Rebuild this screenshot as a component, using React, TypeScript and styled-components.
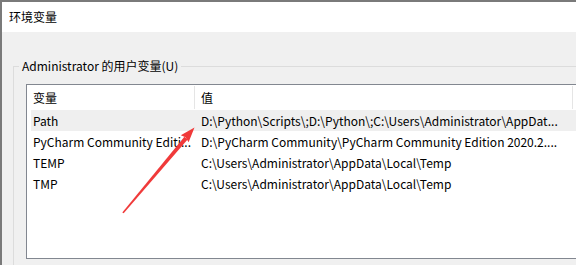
import React from 'react'
import styled, { createGlobalStyle } from 'styled-components'

const GlobalStyle = createGlobalStyle`
    html, body {
        margin: 0;
        padding: 0;
        background: #f0f0f0;
    }
    body {
        font-family: "Noto Sans CJK SC", "Noto Sans", sans-serif;
        font-size: 12px;
        color: #000;
    }
`

const Window = styled.div`
    position: relative;
    width: 576px;
    height: 265px;
    box-sizing: border-box;
    overflow: hidden;
    border-top: 2px solid #7a7a7a;
    border-left: 2px solid #7a7a7a;
    background: #f0f0f0;
`

const TitleBar = styled.div`
    height: 30px;
    background: #fff;
    padding-left: 7px;
    display: flex;
    align-items: center;
    line-height: 1;
`

const Body = styled.div`
    padding: 26px 0 0 11px;
`

const GroupBox = styled.fieldset`
    margin: 0;
    width: 600px;
    height: 240px;
    box-sizing: border-box;
    border: 1px solid #dcdcdc;
    padding: 0 0 0 12px;
    min-inline-size: auto;
`

const GroupLabel = styled.legend`
    margin-left: -7px;
    padding: 0 3px;
    height: 16px;
    line-height: 16px;
    margin-bottom: 10px;
`

const ListBox = styled.div`
    width: 580px;
    height: 175px;
    box-sizing: border-box;
    border: 1px solid #828790;
    background: #fff;
`

const Header = styled.div`
    display: grid;
    grid-template-columns: 168px 378px;
    height: 25px;
`

const HeaderCell = styled.div`
    display: flex;
    align-items: center;
    padding-left: 6px;
    border-right: 1px solid #e5e5e5;
    margin: 1px 0 1px;
`

const Row = styled.div<{ $selected?: boolean }>`
    display: grid;
    grid-template-columns: 164px 1fr;
    height: 21px;
    margin-left: 4px;
    background: ${({ $selected }) => ($selected ? '#efefef' : 'transparent')};
`

const Cell = styled.div<{ $pad: number }>`
    display: flex;
    align-items: center;
    padding-left: ${({ $pad }) => $pad}px;
    padding-right: 4px;
    white-space: nowrap;
    overflow: hidden;
    text-overflow: ellipsis;
`

const Arrow = styled.svg`
    position: absolute;
    left: 0;
    top: 0;
    pointer-events: none;
`

const vars = [
    { name: 'Path', value: 'D:\\Python\\Scripts\\;D:\\Python\\;C:\\Users\\Administrator\\AppDat...' },
    { name: 'PyCharm Community Editi...', value: 'D:\\PyCharm Community\\PyCharm Community Edition 2020.2....' },
    { name: 'TEMP', value: 'C:\\Users\\Administrator\\AppData\\Local\\Temp' },
    { name: 'TMP', value: 'C:\\Users\\Administrator\\AppData\\Local\\Temp' },
]

const App = () => {
    return (
        <>
            <GlobalStyle />
            <Window>
                <TitleBar>环境变量</TitleBar>
                <Body>
                    <GroupBox>
                        <GroupLabel>Administrator 的用户变量(U)</GroupLabel>
                        <ListBox>
                            <Header>
                                <HeaderCell>变量</HeaderCell>
                                <HeaderCell>值</HeaderCell>
                            </Header>
                            {vars.map((v, i) => (
                                <Row key={v.name} $selected={i === 0}>
                                    <Cell $pad={2}>{v.name}</Cell>
                                    <Cell $pad={6}>{v.value}</Cell>
                                </Row>
                            ))}
                        </ListBox>
                    </GroupBox>
                </Body>
                {/* red annotation arrow drawn over the list */}
                <Arrow width="576" height="265" viewBox="2 2 576 265">
                    <polygon
                        points="122.3,212.4 123.7,213.2 187.6,139.6 184.4,136.8"
                        fill="#f03a3a"
                    />
                    <polygon
                        points="194.5,127.5 180.8,135.2 185.5,137.2 188.6,142.2"
                        fill="#f03a3a"
                    />
                </Arrow>
            </Window>
        </>
    )
}

export default App
